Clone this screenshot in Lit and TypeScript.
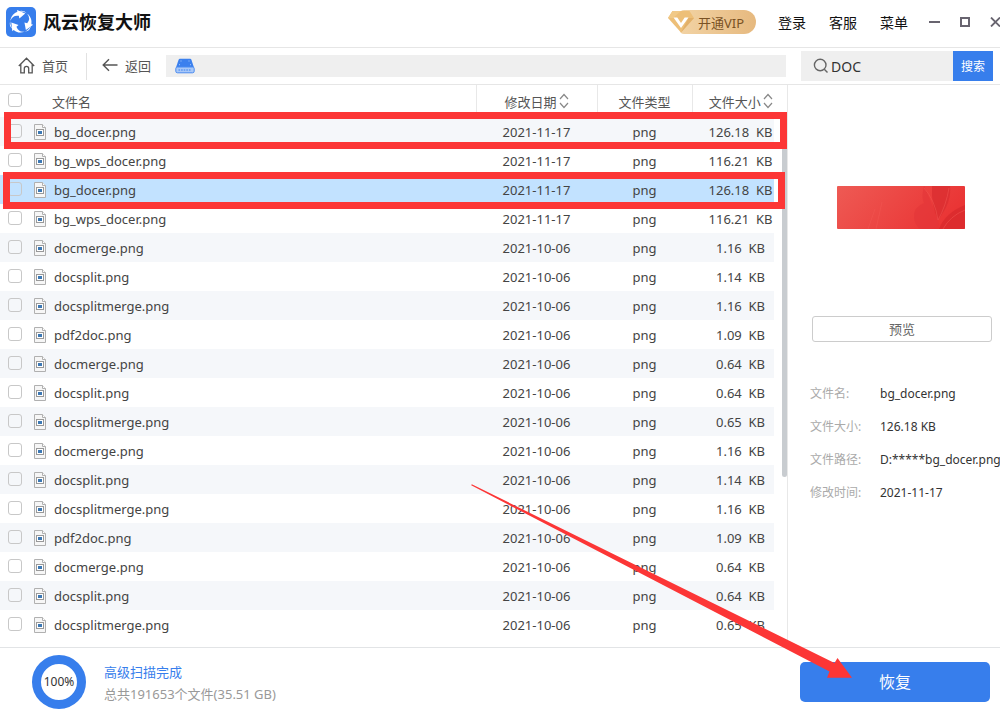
import { LitElement, html, css, svg } from "lit";
import { customElement, property, state } from "lit/decorators.js";
import { classMap } from "lit/directives/class-map.js";

interface FileRow {
  name: string;
  date: string;
  size: string;
}

const file = (name: string, date: string, size: string): FileRow => ({ name: `${name}.png`, date, size });

const FILES: FileRow[] = [
  file("bg_docer", "2021-11-17", "126.18"),
  file("bg_wps_docer", "2021-11-17", "116.21"),
  file("bg_docer", "2021-11-17", "126.18"),
  file("bg_wps_docer", "2021-11-17", "116.21"),
  file("docmerge", "2021-10-06", "1.16"),
  file("docsplit", "2021-10-06", "1.14"),
  file("docsplitmerge", "2021-10-06", "1.16"),
  file("pdf2doc", "2021-10-06", "1.09"),
  file("docmerge", "2021-10-06", "0.64"),
  file("docsplit", "2021-10-06", "0.64"),
  file("docsplitmerge", "2021-10-06", "0.65"),
  file("docmerge", "2021-10-06", "1.16"),
  file("docsplit", "2021-10-06", "1.14"),
  file("docsplitmerge", "2021-10-06", "1.16"),
  file("pdf2doc", "2021-10-06", "1.09"),
  file("docmerge", "2021-10-06", "0.64"),
  file("docsplit", "2021-10-06", "0.64"),
  file("docsplitmerge", "2021-10-06", "0.65"),
];

const base = css`
  * {
    box-sizing: border-box;
  }
  button,
  input {
    font: inherit;
    color: inherit;
    border: 0;
    margin: 0;
    padding: 0;
    background: none;
    outline: none;
  }
  button {
    cursor: pointer;
    white-space: nowrap;
  }
  svg {
    display: block;
    flex: none;
  }
`;

@customElement("title-bar")
class TitleBar extends LitElement {
  static styles = [
    base,
    css`
      :host {
        display: block;
        overflow: hidden;
        border-bottom: 1px solid #e6e6e6;
      }
      .bar {
        display: flex;
        align-items: center;
        height: 47px;
        padding-left: 6px;
        padding-bottom: 3px;
      }
      h1 {
        flex: 1;
        margin: 0 0 0 7px;
        font-size: 18px;
        line-height: 24px;
        font-weight: 700;
        color: #111;
      }
      .vip {
        display: flex;
        align-items: center;
        height: 24px;
        margin-right: 22px;
        padding-right: 12px;
        border-radius: 4px 12px 12px 4px;
        background: linear-gradient(90deg, #f2d3a4, #e6b97f);
        color: #7a5224;
      }
      .vip svg {
        margin: 0 4px 0 -12px;
      }
      nav {
        display: flex;
        gap: 23px;
        font-size: 14px;
        color: #111;
      }
      .window {
        display: flex;
        align-items: center;
        gap: 20px;
        margin: 0 -1px 0 21px;
      }
    `,
  ];

  render() {
    const blade = "M-7.5 7.6A11 11 0 0 1-3.4-10.3L-3.8-12 4.4-8.4-1.4-3.4-2-6.2A7.6 7.6 0 0 0-7.5 7.6Z";
    return html`<header class="bar">
      <svg width="30" height="30" viewBox="0 0 30 30">
        <rect width="30" height="30" rx="5" fill="#377eec" />
        <g fill="#fff" transform="translate(14.8 15)">
          <path d=${blade} />
          <path d=${blade} transform="rotate(120)" />
          <path d=${blade} transform="rotate(240)" />
        </g>
      </svg>
      <h1>风云恢复大师</h1>
      <button class="vip">
        <svg width="26" height="24" viewBox="0 0 26 24">
          <path d="M4.5 1H21.5L26 8 13 22.5 0 8Z" fill="#edbf78" />
          <path d="M4.5 1H13L5 8H0Z" fill="#f1c987" />
          <path d="M13 22.5 26 8H20.5Z" fill="#e2b069" />
          <path d="M5.5 7.5H9.3L13 13 16.7 7.5H20.5L13 18Z" fill="#fff" />
        </svg>
        开通VIP
      </button>
      <nav>
        <button>登录</button>
        <button>客服</button>
        <button>菜单</button>
      </nav>
      <div class="window">
        <button aria-label="最小化">
          <svg width="11" height="12"><path d="M0 6H11" stroke="#68646f" stroke-width="2" /></svg>
        </button>
        <button aria-label="最大化">
          <svg width="10" height="10"><rect x="1" y="1" width="8" height="8" fill="none" stroke="#68646f" stroke-width="2" /></svg>
        </button>
        <button aria-label="关闭">
          <svg width="11" height="10"><path d="M1 0.5 10 9.5M10 0.5 1 9.5" stroke="#68646f" stroke-width="1.8" /></svg>
        </button>
      </div>
    </header>`;
  }
}

@customElement("tool-bar")
class ToolBar extends LitElement {
  static styles = [
    base,
    css`
      :host {
        display: flex;
        align-items: center;
        height: 37px;
        padding-right: 7px;
        border-bottom: 1px solid #e6e6e6;
        color: #555;
      }
      .link {
        display: flex;
        align-items: center;
        gap: 7px;
        height: 27px;
        padding: 0 18px 2px;
      }
      .back {
        padding: 0 15px 2px;
        border-left: 1px solid #e2e2e2;
      }
      .path {
        display: flex;
        align-items: center;
        flex: 1;
        height: 22px;
        padding-left: 9px;
        background: #efefef;
      }
      .search {
        display: flex;
        width: 192px;
        height: 30px;
        margin-left: 15px;
        background: #efefef;
      }
      label {
        display: flex;
        align-items: center;
        flex: 1;
        gap: 2px;
        min-width: 0;
        padding-left: 12px;
      }
      input {
        width: 100%;
        min-width: 0;
        font-size: 14px;
        color: #333;
      }
      .go {
        width: 40px;
        background: #377eec;
        color: #fff;
        font-size: 12px;
      }
    `,
  ];

  @property() query = "";

  render() {
    return html`<button class="link">
        <svg width="17" height="17" viewBox="0 0 17 17" fill="none" stroke="#555" stroke-width="1.3">
          <path d="M0.8 9 8.5 1.2 16.2 9M2.8 7.6V15.8H6.3V11.5A2.2 2.2 0 0 1 10.7 11.5V15.8H14.2V7.6" />
        </svg>
        首页
      </button>
      <button class="link back">
        <svg width="16" height="14" viewBox="0 0 16 14" fill="none" stroke="#555" stroke-width="1.4">
          <path d="M15.5 7H1.2M7 1.3 1.2 7 7 12.7" />
        </svg>
        返回
      </button>
      <div class="path">
        <svg width="20" height="16" viewBox="0 0 20 16">
          <path d="M4.8 0.8H15.2Q16 0.8 16.4 1.8L19 9.5H1L3.6 1.8Q4 0.8 4.8 0.8Z" fill="#3b80ee" />
          <rect x="0.8" y="9" width="18.4" height="5.8" rx="1.6" fill="#a9c8f8" stroke="#4a8bf0" />
          <path d="M3.5 12H16.5" stroke="#6fa4f3" stroke-width="2" stroke-dasharray="1.6 1" />
          <path d="M5.5 3H6.5M13.5 3H14.5M4 6.7H5M15 6.7H16" stroke="#a9c8f8" />
        </svg>
      </div>
      <div class="search">
        <label>
          <svg width="16" height="16" viewBox="0 0 16 16" fill="none" stroke="#666" stroke-width="1.4">
            <circle cx="7.2" cy="7" r="5.8" />
            <path d="M11.3 11.3 14.5 14.5" />
          </svg>
          <input type="text" aria-label="搜索文件" .value=${this.query} />
        </label>
        <button class="go">搜索</button>
      </div>`;
  }
}

@customElement("file-table")
class FileTable extends LitElement {
  static styles = [
    base,
    css`
      :host {
        display: block;
        position: relative;
        min-width: 0;
        padding-right: 13px;
        border-right: 1px solid #e8e8e8;
      }
      table {
        width: 100%;
        table-layout: fixed;
        border-collapse: collapse;
      }
      .c-check {
        width: 30px;
      }
      .c-date {
        width: 121px;
      }
      .c-type {
        width: 95px;
      }
      .c-size {
        width: 82px;
      }
      th,
      td {
        padding: 0;
        text-align: center;
        font-weight: 400;
        white-space: nowrap;
      }
      th {
        height: 32px;
        color: #555;
      }
      th.sep {
        border-left: 1px solid #e8e8e8;
      }
      td {
        height: 29px;
        color: #444;
      }
      tbody tr:nth-child(odd) {
        background: #f5f7fa;
      }
      tbody tr.selected {
        background: #c2e2ff;
      }
      th.name {
        text-align: left;
        padding-left: 22px;
      }
      td.name {
        text-align: left;
        padding-left: 4px;
      }
      .cell {
        display: flex;
        align-items: center;
        gap: 8px;
      }
      .size {
        white-space: pre;
      }
      th.size,
      td.size {
        padding-left: 15px;
      }
      .sort {
        display: inline-flex;
        align-items: center;
        gap: 2px;
      }
      input {
        appearance: none;
        display: block;
        width: 14px;
        height: 14px;
        margin: 0 0 2px 8px;
        border: 1px solid #c8c8c8;
        border-radius: 3px;
      }
      .thumb {
        position: absolute;
        top: 33px;
        right: 0;
        width: 5px;
        height: 359px;
        border-radius: 3px;
        background: #c8ccd0;
      }
      .mark {
        position: absolute;
        left: 4px;
        right: 0;
        height: 37px;
        border: 7px solid #fc3636;
        pointer-events: none;
      }
      .first {
        top: 27px;
      }
      .second {
        top: 87px;
        right: 2px;
        left: 3px;
      }
    `,
  ];

  @property({ attribute: false }) files: FileRow[] = [];
  @property({ type: Number }) selected = -1;

  private sortIcon() {
    return svg`<svg width="10" height="16" viewBox="0 0 10 16" fill="none" stroke="#888" stroke-width="1.2"><path d="M1 6 5 1.5 9 6M1 10 5 14.5 9 10" /></svg>`;
  }

  private pick(index: number) {
    this.dispatchEvent(new CustomEvent("pick", { detail: index }));
  }

  render() {
    return html`<table>
        <colgroup>
          <col class="c-check" />
          <col />
          <col class="c-date" />
          <col class="c-type" />
          <col class="c-size" />
        </colgroup>
        <thead>
          <tr>
            <th><input type="checkbox" aria-label="全选" /></th>
            <th class="name">文件名</th>
            <th class="sep"><button class="sort">修改日期 ${this.sortIcon()}</button></th>
            <th class="sep">文件类型</th>
            <th class="sep size"><button class="sort">文件大小 ${this.sortIcon()}</button></th>
          </tr>
        </thead>
        <tbody>
          ${this.files.map(
            (f, i) => html`<tr class=${classMap({ selected: i === this.selected })} @click=${() => this.pick(i)}>
              <td><input type="checkbox" aria-label=${f.name} /></td>
              <td class="name">
                <span class="cell">
                  <svg width="12" height="16" viewBox="0 0 12 16">
                    <path d="M0.5 0.5H8.5L11.5 3.5V15.5H0.5Z" fill="#f6f6f6" stroke="#b0b0b0" />
                    <path d="M8.5 0.5V3.5H11.5" fill="#fff" stroke="#b0b0b0" />
                    <rect x="2.5" y="5.5" width="7" height="6" fill="#fff" stroke="#999" />
                    <rect x="4" y="7" width="4" height="3" fill="#3c78b4" />
                  </svg>
                  ${f.name}
                </span>
              </td>
              <td>${f.date}</td>
              <td>png</td>
              <td class="size">${f.size}  KB</td>
            </tr>`
          )}
        </tbody>
      </table>
      <div class="thumb"></div>
      <div class="mark first"></div>
      <div class="mark second"></div>`;
  }
}

@customElement("detail-panel")
class DetailPanel extends LitElement {
  static styles = [
    base,
    css`
      :host {
        display: flex;
        flex-direction: column;
        min-width: 0;
        padding: 101px 0 0 22px;
        overflow: hidden;
      }
      .picture {
        align-self: center;
        margin-right: 8px;
      }
      .preview {
        height: 26px;
        margin: 87px 8px 0 2px;
        padding-bottom: 2px;
        border: 1px solid #ccc;
        border-radius: 3px;
        color: #666;
      }
      dl {
        display: grid;
        grid-template-columns: 70px 1fr;
        margin: 35px 0 0;
        line-height: 33px;
        white-space: nowrap;
      }
      dt {
        font-size: 12px;
        color: #aaa;
      }
      dd {
        margin: 0;
        font-size: 12px;
        color: #333;
      }
    `,
  ];

  @property({ attribute: false }) file!: FileRow;

  render() {
    return html`<svg class="picture" width="128" height="43" viewBox="0 0 128 43">
        <defs>
          <linearGradient id="red" x2="1" y2="0.3">
            <stop offset="0" stop-color="#ee5a54" />
            <stop offset="1" stop-color="#ea3535" />
          </linearGradient>
          <clipPath id="frame"><rect width="128" height="43" rx="1" /></clipPath>
        </defs>
        <g clip-path="url(#frame)">
          <rect width="128" height="43" fill="url(#red)" />
          <path d="M87 0Q84 11 87 17Q76 21 77 32Q78 39 83 43H101Q103 35 99 31Q94 14 87 0Z" fill="#e33538" opacity="0.6" />
          <path d="M95 0H113Q115 16 101 34Q94 20 95 0Z" fill="#d92d30" opacity="0.75" />
          <path d="M128 19Q108 27 102 43H128Z" fill="#da2b2d" opacity="0.8" />
          <path d="M87 2Q98 14 101 34M112 2Q109 20 101 34M128 24Q113 30 106 43M38 23 31 43M45 16 39 43" fill="none" stroke="#f35753" opacity="0.5" />
        </g>
      </svg>
      <button class="preview">预览</button>
      <dl>
        <dt>文件名:</dt>
        <dd>${this.file.name}</dd>
        <dt>文件大小:</dt>
        <dd>${this.file.size} KB</dd>
        <dt>文件路径:</dt>
        <dd>D:*****${this.file.name}</dd>
        <dt>修改时间:</dt>
        <dd>${this.file.date}</dd>
      </dl>`;
  }
}

@customElement("status-bar")
class StatusBar extends LitElement {
  static styles = [
    base,
    css`
      :host {
        display: flex;
        align-items: center;
        height: 65px;
        padding: 3px 10px 0 32px;
        border-top: 1px solid #e2e4e6;
      }
      .ring {
        display: grid;
        place-items: center;
        width: 54px;
        height: 54px;
        border: 9px solid #377eec;
        border-radius: 50%;
        font-size: 12px;
        color: #333;
      }
      .text {
        flex: 1;
        margin: 2px 18px 0;
        line-height: 22px;
        color: #999;
      }
      .done {
        color: #377eec;
      }
      .recover {
        width: 190px;
        height: 40px;
        padding-bottom: 2px;
        border-radius: 5px;
        background: #377eec;
        color: #fff;
        font-size: 16px;
      }
    `,
  ];

  render() {
    return html`<div class="ring">100%</div>
      <div class="text">
        <div class="done">高级扫描完成</div>
        <div>总共191653个文件(35.51 GB)</div>
      </div>
      <button class="recover">恢复</button>`;
  }
}

@customElement("app-root")
class AppRoot extends LitElement {
  static styles = [
    base,
    css`
      :host {
        display: flex;
        flex-direction: column;
        position: relative;
        min-height: 100vh;
        overflow: hidden;
        background: #fff;
        font: 13px "Noto Sans", "Noto Sans CJK SC", sans-serif;
      }
      main {
        flex: 1;
        display: grid;
        grid-template-columns: minmax(0, 1fr) 212px;
      }
      .arrow {
        position: absolute;
        right: 148px;
        bottom: 34px;
        pointer-events: none;
      }
    `,
  ];

  @state() private selected = 2;

  render() {
    return html`<title-bar></title-bar>
      <tool-bar query="DOC"></tool-bar>
      <main>
        <file-table
          .files=${FILES}
          .selected=${this.selected}
          @pick=${(e: CustomEvent<number>) => (this.selected = e.detail)}
        ></file-table>
        <detail-panel .file=${FILES[this.selected]}></detail-panel>
      </main>
      <status-bar></status-bar>
      <svg class="arrow" width="381" height="194" viewBox="0 0 381 194">
        <path d="M0.8 0.3 363.5 179 366.5 174 381 193.7H356L358.5 187.5 0.2 1.3Z" fill="#fc3636" />
      </svg>`;
  }
}
